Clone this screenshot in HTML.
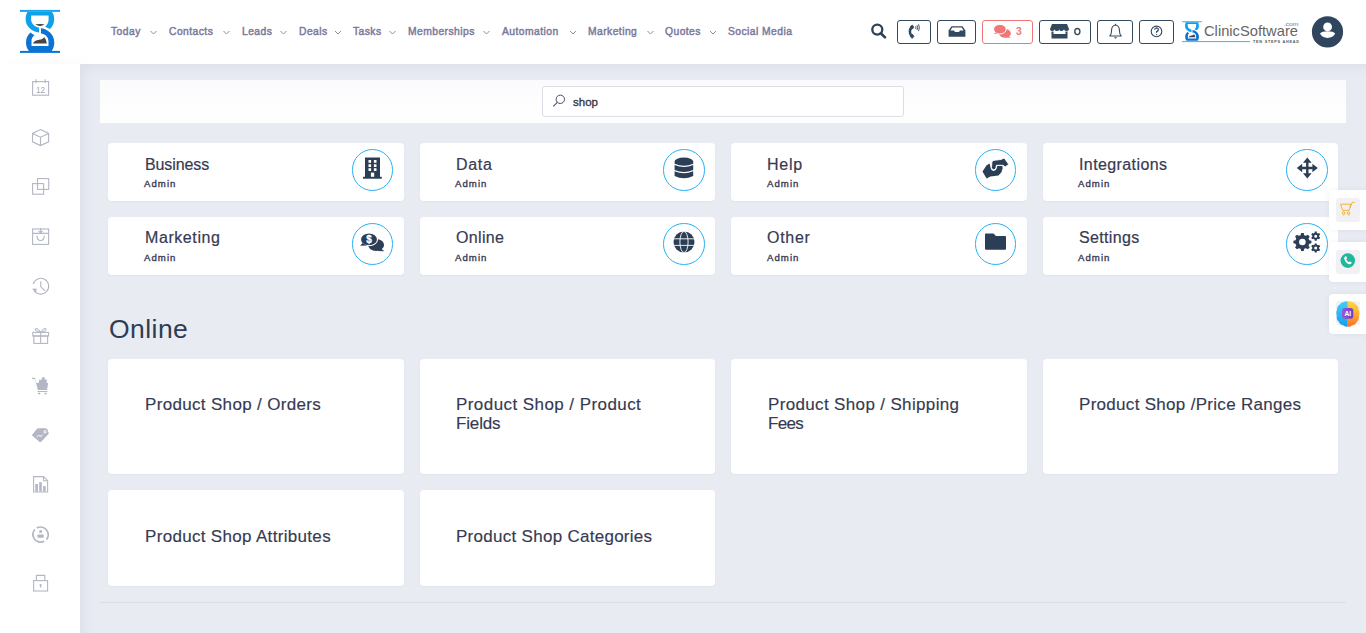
<!DOCTYPE html>
<html><head><meta charset="utf-8">
<style>
*{box-sizing:border-box;margin:0;padding:0}
html,body{width:1366px;height:633px;overflow:hidden;background:#e8ebf2;font-family:"Liberation Sans",sans-serif;position:relative}
.abs{position:absolute}
#header{position:absolute;left:0;top:0;width:1366px;height:64px;background:#fff}
#side{position:absolute;left:0;top:64px;width:80px;height:569px;background:#fff}
#main{position:absolute;left:80px;top:64px;width:1286px;height:569px;background:#e8ebf2;box-shadow:inset 10px 10px 14px -8px rgba(40,50,90,0.07)}
.nav{position:absolute;top:24.6px;font-size:10.3px;color:#7b7a9b;-webkit-text-stroke:0.45px #7b7a9b;letter-spacing:0.45px;white-space:nowrap;line-height:14px}
.chev{position:absolute;top:31px;width:8px;height:5px}
.btn{position:absolute;top:20px;height:24px;border:1.3px solid #34495e;border-radius:3px}
.card{position:absolute;background:#fff;border-radius:4px;box-shadow:0 1px 2px rgba(40,50,90,0.04)}
.ct{position:absolute;left:37px;top:11.6px;-webkit-text-stroke:0.2px #363a52;font-size:16px;color:#363a52;white-space:nowrap;line-height:20px}
.ca{position:absolute;left:36px;top:33.9px;font-size:9.6px;letter-spacing:1.05px;color:#3a3a55;-webkit-text-stroke:0.35px #3a3a55;line-height:13px}
.circ{position:absolute;width:41.5px;height:41.5px;border:1.4px solid #27b0f4;border-radius:50%;top:6px;left:243.4px}
.c1 .circ,.c3 .circ{left:243.9px}
.c2 .ct,.c3 .ct,.c4 .ct{left:36px}
.c2 .bt,.c4 .bt{left:36px}
.c2 .ca,.c4 .ca{left:35px}
.r2 .ct{top:10.6px}
.rb .bt{top:36.5px}
.bt{position:absolute;left:37px;top:35.8px;-webkit-text-stroke:0.15px #363a52;font-size:17px;letter-spacing:0.33px;color:#363a52;line-height:19px}
.wid{position:absolute;left:1329px;width:40px;background:#fff;border-radius:4px;box-shadow:0 0 5px rgba(40,50,90,0.07)}
.wq{position:absolute;left:7px;width:24px;height:24px;background:#f0f0f5;border-radius:3px}
.sic{position:absolute;left:31px}
</style></head><body>
<div id="main"></div>
<div id="side"></div>
<div id="header"></div>
<div class="abs" style="left:0;top:48px;width:100px;height:16px;background:radial-gradient(ellipse 50px 12px at 50% 100%,rgba(0,0,0,0.018),rgba(0,0,0,0))"></div>

<!-- logo -->
<svg class="abs" style="left:0;top:0" width="80" height="64" viewBox="0 0 80 64">
 <path d="M27.4 11.9 L52.1 11.9 C53.8 14 54.2 16.5 54.2 19.1 C54.2 23.5 52.5 26.8 50 29 L45.1 26.7 C47.3 25 48.6 22.5 48.6 19.5 L48.6 15.4 L31.1 15.4 L31.1 19.5 C31.1 23.5 34.5 26.5 39 27.7 L39 32.6 C31.5 31.5 25.6 26.5 25.6 19.1 C25.6 16.3 26.3 13.8 27.4 11.9Z" fill="#0ea0e8"/>
 <path d="M41 28.3 C46 28.8 54.3 33 54.3 42.5 C54.3 46 53.3 49 51.6 51.1 L29 51.1 C27 49 26 46 26 42.5 C26 38 27.8 34.8 30.4 32.5 L34.4 35.2 C32.5 36.8 31.5 38.5 31.5 41 L31.5 46 L48.5 46 L48.5 41.6 C48.5 37 45 33.8 41 33.6Z" fill="#0a74d6"/>
 <rect x="20" y="9.9" width="40" height="2" fill="#19a6ec"/>
 <rect x="20" y="50.9" width="40" height="2" fill="#0a74d6"/>
 <path d="M35.3 24.2 Q40 23.6 44.7 24.2 Q42 26.2 40 26 Q37.5 26 35.3 24.2Z" fill="#474747"/>
 <path d="M33 43.6 C33.5 41.5 36 40.3 39.2 39.8 C41.5 39.4 43 39 44.1 37.2 C45.2 38 46.5 40.5 46.8 43.6Z" fill="#474747"/>
</svg>

<!-- nav -->
<div class="nav" style="left:111px">Today</div>
<div class="nav" style="left:169px">Contacts</div>
<div class="nav" style="left:242px">Leads</div>
<div class="nav" style="left:299px">Deals</div>
<div class="nav" style="left:353px">Tasks</div>
<div class="nav" style="left:408px">Memberships</div>
<div class="nav" style="left:502px">Automation</div>
<div class="nav" style="left:588px">Marketing</div>
<div class="nav" style="left:665px">Quotes</div>
<div class="nav" style="left:728px">Social Media</div>
<svg class="abs" style="left:0;top:0" width="800" height="64">
 <g fill="none" stroke="#8d8caa" stroke-width="1">
  <path d="M150.5 31 L153.5 34 L156.5 31"/>
  <path d="M223.5 31 L226.5 34 L229.5 31"/>
  <path d="M280.5 31 L283.5 34 L286.5 31"/>
  <path d="M335.0 31 L338.0 34 L341.0 31"/>
  <path d="M389.5 31 L392.5 34 L395.5 31"/>
  <path d="M483.5 31 L486.5 34 L489.5 31"/>
  <path d="M570.0 31 L573.0 34 L576.0 31"/>
  <path d="M647.5 31 L650.5 34 L653.5 31"/>
  <path d="M710.0 31 L713.0 34 L716.0 31"/>
 </g>
</svg>

<!-- header right -->
<svg class="abs" style="left:868px;top:21px" width="22" height="22" viewBox="0 0 22 22">
 <circle cx="9.3" cy="8.6" r="5" fill="none" stroke="#2e4259" stroke-width="2.3"/>
 <path d="M12.8 12.2 L17 16.4" stroke="#2e4259" stroke-width="2.7" stroke-linecap="round"/>
</svg>
<div class="btn" style="left:897px;width:34px"></div>
<div class="btn" style="left:937px;width:39px"></div>
<div class="btn" style="left:982px;width:51px;border-color:#f07777"></div>
<div class="btn" style="left:1039px;width:52px"></div>
<div class="btn" style="left:1097px;width:36px"></div>
<div class="btn" style="left:1139px;width:35px"></div>

<svg class="abs" style="left:0;top:0" width="1366" height="64">
 <!-- phone -->
 <path d="M911.3 27.6 Q908.4 31.5 911.3 35.6" fill="none" stroke="#34495e" stroke-width="2.6" stroke-linecap="round"/>
 <path d="M910.3 26.6 L912.4 25 L913.9 27.6 L911.7 29.2Z" fill="#34495e" stroke="#34495e" stroke-width="0.8" stroke-linejoin="round"/>
 <path d="M910.3 36.4 L912.2 34.1 L914 36.3 L912.2 38.4Z" fill="#34495e" stroke="#34495e" stroke-width="0.8" stroke-linejoin="round"/>
 <g fill="none" stroke="#34495e" stroke-width="0.95">
  <path d="M915.6 26.4 Q916.4 27.6 915.6 28.9"/>
  <path d="M917 25.3 Q918.3 27.6 917 29.9"/>
  <path d="M918.5 24.3 Q920.3 27.6 918.5 30.9"/>
 </g>
 <!-- inbox -->
 <path d="M951.5 26.2 L962.5 26.2 L965.4 30.6 L965.4 36.8 L948.6 36.8 L948.6 30.6Z" fill="#34495e"/>
 <path d="M952.3 27.6 L961.7 27.6 L963.6 30.4 L960 30.4 L959 32 L955 32 L954 30.4 L950.4 30.4Z" fill="#fff"/>
 <!-- comments -->
 <g fill="#f07777">
  <ellipse cx="1005" cy="33.4" rx="5.9" ry="4.4"/>
  <path d="M1008.5 36 L1010.9 37.8 L1006 37.5Z"/>
  <ellipse cx="999.9" cy="29.2" rx="6.3" ry="4.8" stroke="#fff" stroke-width="1"/>
  <path d="M995.5 32.5 L993.8 33.9 L998 33.6Z"/>
 </g>
 <text x="1015.9" y="35" font-family="Liberation Sans" font-weight="bold" font-size="10.2" fill="#f07777" textLength="5.8" lengthAdjust="spacingAndGlyphs">3</text>
 <!-- store -->
 <path d="M1052 24 L1067 24 L1069 29 Q1069 31 1067 31 Q1064.5 31 1064 29.5 Q1063 31 1061 31 Q1059.5 31 1059.5 29.5 Q1058.5 31 1057 31 Q1055 31 1054.5 29.5 Q1054 31 1052 31 Q1050 31 1050 29Z" fill="#34495e"/>
 <path d="M1051.5 31.5 L1053.5 31.5 L1053.5 34 L1065.5 34 L1065.5 31.5 L1067.5 31.5 L1067.5 38.5 L1051.5 38.5Z" fill="#34495e"/>
 <ellipse cx="1077.35" cy="31.5" rx="2.55" ry="3.05" fill="none" stroke="#34495e" stroke-width="1.35"/>
 <!-- bell -->
 <path d="M1115.5 25 C1112 25.5 1111.5 28 1111.5 31 C1111.5 34 1110.8 35 1109.8 36 L1121.2 36 C1120.2 35 1119.5 34 1119.5 31 C1119.5 28 1119 25.5 1115.5 25Z" fill="none" stroke="#34495e" stroke-width="1.1" stroke-linejoin="round"/>
 <path d="M1115.5 23.8 L1115.5 25" stroke="#34495e" stroke-width="1.2"/>
 <path d="M1113.8 37.3 L1117.2 37.3 L1115.5 38.8Z" fill="#34495e"/>
 <!-- help -->
 <circle cx="1156.5" cy="31.4" r="5.3" fill="none" stroke="#34495e" stroke-width="1.1"/>
 <path d="M1154.6 29.8 Q1154.8 27.8 1156.6 27.8 Q1158.4 27.9 1158.4 29.6 Q1158.3 30.8 1156.6 31.6 L1156.6 32.8" fill="none" stroke="#34495e" stroke-width="1.2"/>
 <circle cx="1156.6" cy="34.6" r="0.7" fill="#34495e"/>
</svg>

<!-- clinic software logo -->
<svg class="abs" style="left:1180px;top:15px" width="125" height="32" viewBox="0 0 125 32">
 <g transform="translate(2.3 6.3) scale(0.485 0.475) translate(-20 -9.9)">
 <path d="M27.4 11.9 L52.1 11.9 C53.8 14 54.2 16.5 54.2 19.1 C54.2 23.5 52.5 26.8 50 29 L45.1 26.7 C47.3 25 48.6 22.5 48.6 19.5 L48.6 15.4 L31.1 15.4 L31.1 19.5 C31.1 23.5 34.5 26.5 39 27.7 L39 32.6 C31.5 31.5 25.6 26.5 25.6 19.1 C25.6 16.3 26.3 13.8 27.4 11.9Z" fill="#0ea0e8"/>
 <path d="M41 28.3 C46 28.8 54.3 33 54.3 42.5 C54.3 46 53.3 49 51.6 51.1 L29 51.1 C27 49 26 46 26 42.5 C26 38 27.8 34.8 30.4 32.5 L34.4 35.2 C32.5 36.8 31.5 38.5 31.5 41 L31.5 46 L48.5 46 L48.5 41.6 C48.5 37 45 33.8 41 33.6Z" fill="#0a74d6"/>
 <rect x="20" y="9.9" width="40" height="2" fill="#19a6ec"/>
 <path d="M33 43.6 C33.5 41.5 36 40.3 39.2 39.8 C41.5 39.4 43 39 44.1 37.2 C45.2 38 46.5 40.5 46.8 43.6Z" fill="#474747"/>
 </g>
 <rect x="2" y="26.2" width="68" height="0.9" fill="#3da0e8"/>
 <text x="24" y="20.9" font-family="Liberation Sans" font-size="14.6" fill="#666" textLength="94" lengthAdjust="spacingAndGlyphs">ClinicSoftware</text>
 <text x="103.5" y="11" font-family="Liberation Sans" font-size="6" fill="#777" textLength="15" lengthAdjust="spacingAndGlyphs">.com</text>
 <text x="73" y="28.4" font-family="Liberation Sans" font-weight="bold" font-size="3.8" fill="#555" textLength="46" lengthAdjust="spacing">TEN STEPS AHEAD</text>
</svg>
<!-- avatar -->
<svg class="abs" style="left:1311px;top:15px" width="34" height="34" viewBox="0 0 34 34">
 <circle cx="16.5" cy="16.9" r="15.6" fill="#30465e"/>
 <circle cx="16.6" cy="11.9" r="4.4" fill="#fff"/>
 <path d="M9 18.6 Q11 16.2 16.6 16.2 Q22.2 16.2 24.2 18.6 Q22 22.9 16.6 22.9 Q11.2 22.9 9 18.6Z" fill="#fff"/>
</svg>



<!-- sidebar icons -->
<svg class="abs" style="left:0;top:64px" width="80" height="569" viewBox="0 64 80 569">
 <g fill="none" stroke="#b3b6c4" stroke-width="1.1">
  <!-- calendar -->
  <rect x="32.6" y="81.6" width="16" height="13.6"/>
  <path d="M36 79.2 V83 M45.2 79.2 V83"/>
  <text x="40.6" y="93.3" font-family="Liberation Sans" font-size="8.2" fill="#a4a7b6" stroke="none" text-anchor="middle">12</text>
  <!-- cube -->
  <path d="M40.5 129.6 L48.6 133.4 L48.6 141.8 L40.5 145.6 L32.5 141.8 L32.5 133.4Z M32.5 133.4 L40.5 137.2 L48.6 133.4 M40.5 137.2 V145.6"/>
  <!-- copy -->
  <rect x="37.5" y="178.6" width="11.2" height="10.8"/>
  <rect x="32.6" y="183.6" width="11" height="10.6"/>
  <!-- box -->
  <rect x="32.6" y="229" width="16" height="15.4"/>
  <path d="M32.6 233.4 H48.6 M40.6 228 V232.5 M38.6 230.8 L40.6 232.8 L42.6 230.8 M37 235.5 Q37 240.5 40.6 240.5 Q44.2 240.5 44.2 235.5"/>
  <!-- history -->
  <path d="M34.5 291 A7.9 7.9 0 1 0 33.2 284"/>
  <path d="M40.8 281.2 V286.8 L45 290.6"/>
  <!-- gift -->
  <rect x="32.8" y="332.4" width="15.8" height="3.6"/>
  <rect x="33.8" y="336" width="13.8" height="7.4"/>
  <path d="M40.7 332.4 V343.4 M40.7 332.4 Q37 327 35.5 329 Q34.5 331 40.7 332.4 M40.7 332.4 Q44.4 327 45.9 329 Q46.9 331 40.7 332.4"/>
  <!-- report -->
  <path d="M33.6 476.6 H43.5 L47.6 480.7 V492 H33.6Z M43.5 476.6 V480.7 H47.6"/>
  <!-- user circle -->
  <circle cx="40.6" cy="534.6" r="7.6" stroke-width="1.7" stroke-dasharray="21 3 21 3" transform="rotate(-120 40.6 534.6)"/>
  <!-- lock -->
  <rect x="33.6" y="580.6" width="14" height="10.4"/>
  <path d="M36.4 580.6 V575.4 H44.8 V580.6"/>
 </g>
 <g fill="#b3b6c4">
  <path d="M32.3 288.5 L35.2 293 L37 288.8Z"/>
  <!-- cart -->
  <path d="M32.4 377.6 L35 378 L36.5 383 L48.2 383 L47 390 L37.8 390 L35.2 379.2 L32.2 379Z"/>
  <path d="M37.5 391 H47.3 V392 H37.5Z"/>
  <rect x="38" y="392.8" width="2.2" height="1.5"/><rect x="44.5" y="392.8" width="2.2" height="1.5"/>
  <path d="M38.5 383 L39.5 379.5 L41.5 380 L42 377.5 L44.2 377 L45 379.5 L47 379.8 L46.5 383Z"/>
  <!-- tag -->
  <path d="M31.8 435.2 L36.8 429 Q37.5 428.2 38.5 428.2 L45.5 428.2 Q46.5 428.2 47.2 429 L48.9 433.6 L41.2 441.8 Q40.3 442.4 39.4 441.8Z"/>
  <!-- report bars -->
  <rect x="35.3" y="484" width="2.6" height="7.5"/><rect x="39.2" y="482.2" width="2.6" height="9.3"/><rect x="43.1" y="486.1" width="2.6" height="5.4"/>
  <!-- user -->
  <circle cx="40.6" cy="531.6" r="1.5"/>
  <rect x="37.4" y="534.6" width="6.4" height="3.2" rx="1"/>
  <!-- lock keyhole -->
  <circle cx="40.6" cy="585.2" r="1.1"/><rect x="40.1" y="585.5" width="1" height="2.2"/>
 </g>
 <g fill="none" stroke="#fff" stroke-width="1">
  <path d="M36.8 437 Q38.4 434.2 39.8 436 Q41.2 437.6 42.6 434.6"/><circle cx="45" cy="431.8" r="1.2"/>
 </g>
</svg>

<!-- search panel -->
<div class="abs" style="left:100px;top:80px;width:1246px;height:43px;background:linear-gradient(#fbfbfd,#fff)"></div>
<div class="abs" style="left:542px;top:86px;width:362px;height:31px;border:1px solid #dcdde6;border-radius:3px;background:#fff"></div>
<svg class="abs" style="left:552px;top:94px" width="14" height="14" viewBox="0 0 14 14">
 <circle cx="8.3" cy="5.3" r="4.2" fill="none" stroke="#4a4a66" stroke-width="1"/>
 <path d="M5.3 8.3 L1.3 12.3" stroke="#4a4a66" stroke-width="1.1"/>
</svg>
<div class="abs" style="left:573px;top:95px;font-size:11.5px;color:#383848;line-height:14px;-webkit-text-stroke:0.35px #383848">shop</div>

<!-- admin cards -->
<div class="card c1" style="left:108px;top:143px;width:296px;height:58px"><div class="ct" style="letter-spacing:-0.1px">Business</div><div class="ca">Admin</div><div class="circ"></div></div>
<div class="card c2" style="left:420px;top:143px;width:295px;height:58px"><div class="ct" style="letter-spacing:0.7px">Data</div><div class="ca">Admin</div><div class="circ"></div></div>
<div class="card c3" style="left:731px;top:143px;width:296px;height:58px"><div class="ct" style="letter-spacing:0.75px">Help</div><div class="ca">Admin</div><div class="circ"></div></div>
<div class="card c4" style="left:1043px;top:143px;width:295px;height:58px"><div class="ct" style="letter-spacing:0.4px">Integrations</div><div class="ca">Admin</div><div class="circ"></div></div>
<div class="card c1 r2" style="left:108px;top:217px;width:296px;height:58px"><div class="ct" style="letter-spacing:0.58px">Marketing</div><div class="ca">Admin</div><div class="circ"></div></div>
<div class="card c2 r2" style="left:420px;top:217px;width:295px;height:58px"><div class="ct" style="letter-spacing:0.33px">Online</div><div class="ca">Admin</div><div class="circ"></div></div>
<div class="card c3 r2" style="left:731px;top:217px;width:296px;height:58px"><div class="ct" style="letter-spacing:0.72px">Other</div><div class="ca">Admin</div><div class="circ"></div></div>
<div class="card c4 r2" style="left:1043px;top:217px;width:295px;height:58px"><div class="ct" style="letter-spacing:0.34px">Settings</div><div class="ca">Admin</div><div class="circ"></div></div>

<!-- heading -->
<div class="abs" style="left:109px;top:314px;font-size:26.5px;letter-spacing:0.45px;color:#2e3d52;line-height:30px">Online</div>

<!-- big cards -->
<div class="card" style="left:108px;top:359px;width:296px;height:115px"><div class="bt">Product Shop / Orders</div></div>
<div class="card c2" style="left:420px;top:359px;width:295px;height:115px"><div class="bt" style="letter-spacing:0.43px">Product Shop / Product<br><span style="letter-spacing:-0.15px">Fields</span></div></div>
<div class="card" style="left:731px;top:359px;width:296px;height:115px"><div class="bt" style="letter-spacing:0.35px">Product Shop / Shipping<br><span style="letter-spacing:-0.7px">Fees</span></div></div>
<div class="card c4" style="left:1043px;top:359px;width:295px;height:115px"><div class="bt" style="letter-spacing:0.3px">Product Shop /Price Ranges</div></div>
<div class="card rb" style="left:108px;top:490px;width:296px;height:96px"><div class="bt" style="letter-spacing:0.32px">Product Shop Attributes</div></div>
<div class="card c2 rb" style="left:420px;top:490px;width:295px;height:96px"><div class="bt" style="letter-spacing:0.28px">Product Shop Categories</div></div>

<div class="abs" style="left:100px;top:602px;width:1246px;height:1px;background:#dcdee5"></div>


<!-- card icons -->
<svg class="abs" style="left:0;top:0;pointer-events:none" width="1366" height="300">
 <g fill="#2c3e55">
  <!-- building -->
  <rect x="365" y="157.5" width="15" height="20"/>
  <rect x="363" y="176.8" width="18.8" height="1.9"/>
  <g fill="#fff">
   <rect x="368.5" y="160" width="2.6" height="2.8"/><rect x="373.9" y="160" width="2.6" height="2.8"/>
   <rect x="368.5" y="164.2" width="2.6" height="2.8"/><rect x="373.9" y="164.2" width="2.6" height="2.8"/>
   <rect x="368.5" y="168.2" width="2.6" height="2.8"/><rect x="373.9" y="168.2" width="2.6" height="2.8"/>
   <rect x="370.9" y="172.6" width="3.3" height="4.2"/>
  </g>
  <!-- database -->
  <path d="M674.6 161.4 A9.3 3.8 0 0 1 693.2 161.4 L693.2 163.8 Q683.9 167.8 674.6 163.8Z"/>
  <path d="M674.6 165 Q683.9 169 693.2 165 L693.2 170 Q683.9 174 674.6 170Z"/>
  <path d="M674.6 171.2 Q683.9 175.2 693.2 171.2 L693.2 176 Q683.9 180.4 674.6 176Z"/>
  <!-- handshake -->
  <path d="M982.5 171.4 L986.6 165.3 L989.6 163.6 L990.3 166.5 Q990.8 170.5 993.6 171 Q996.5 171 997.3 166.1 L1002.4 166.1 L1002.6 168.6 L1001.4 172.3 L998.5 175.5 L990.3 176.4 L986.6 178.6Z"/>
  <path d="M1004.2 157.9 L1008.8 164.4 L1005.1 166.9 L1003 165.3 L996.4 165.3 L996 167.8 Q995 170 993.6 169.8 Q991.5 169.5 991.5 167.5 L991.9 162 Q992.5 160.5 994 160.3 L1001 159.5Z" stroke="#fff" stroke-width="0.9"/>
  <!-- arrows -->
  <path d="M1307.3 157.6 L1311.6 162.8 L1308.5 162.8 L1308.5 166.8 L1312.4 166.8 L1312.4 163.7 L1317.8 168 L1312.4 172.3 L1312.4 169.2 L1308.5 169.2 L1308.5 173.3 L1311.6 173.3 L1307.3 178.6 L1303 173.3 L1306.1 173.3 L1306.1 169.2 L1302.2 169.2 L1302.2 172.3 L1296.8 168 L1302.2 163.7 L1302.2 166.8 L1306.1 166.8 L1306.1 162.8 L1303 162.8Z"/>
  <!-- comments dollar -->
  <ellipse cx="376.1" cy="245" rx="8" ry="6.1"/>
  <path d="M381 248.5 L384.3 251.2 L377.5 250.9Z"/>
  <ellipse cx="369" cy="239.4" rx="8.5" ry="6.4" stroke="#fff" stroke-width="1.1"/>
  <path d="M362.5 243 L360.2 245.7 L367 245.6Z"/>
  <!-- globe -->
  <circle cx="684" cy="242" r="10.5"/>
  <!-- folder -->
  <path d="M985.8 233.6 L993.5 233.6 L996 236 L1005 236 Q1006 236 1006 237 L1006 249 Q1006 249.8 1005 249.8 L986 249.8 Q985 249.8 985 249 L985 234.5 Q985 233.6 985.8 233.6Z"/>
  <!-- cogs -->
  <path fill-rule="evenodd" d="M1300.61 235.13 L1301.07 233.00 L1303.73 233.00 L1304.19 235.13 L1305.99 235.87 L1307.82 234.69 L1309.71 236.58 L1308.53 238.41 L1309.27 240.21 L1311.40 240.67 L1311.40 243.33 L1309.27 243.79 L1308.53 245.59 L1309.71 247.42 L1307.82 249.31 L1305.99 248.13 L1304.19 248.87 L1303.73 251.00 L1301.07 251.00 L1300.61 248.87 L1298.81 248.13 L1296.98 249.31 L1295.09 247.42 L1296.27 245.59 L1295.53 243.79 L1293.40 243.33 L1293.40 240.67 L1295.53 240.21 L1296.27 238.41 L1295.09 236.58 L1296.98 234.69 L1298.81 235.87Z M1305.70 242.00 A3.3 3.3 0 1 0 1299.10 242.00 A3.3 3.3 0 1 0 1305.70 242.00Z"/>
  <path fill-rule="evenodd" d="M1314.53 232.90 L1314.74 231.60 L1316.66 231.60 L1316.87 232.90 L1317.97 233.54 L1319.20 233.07 L1320.16 234.73 L1319.14 235.56 L1319.14 236.84 L1320.16 237.67 L1319.20 239.33 L1317.97 238.86 L1316.87 239.50 L1316.66 240.80 L1314.74 240.80 L1314.53 239.50 L1313.43 238.86 L1312.20 239.33 L1311.24 237.67 L1312.26 236.84 L1312.26 235.56 L1311.24 234.73 L1312.20 233.07 L1313.43 233.54Z M1317.20 236.20 A1.5 1.5 0 1 0 1314.20 236.20 A1.5 1.5 0 1 0 1317.20 236.20Z"/>
  <path fill-rule="evenodd" d="M1314.53 244.70 L1314.74 243.40 L1316.66 243.40 L1316.87 244.70 L1317.97 245.34 L1319.20 244.87 L1320.16 246.53 L1319.14 247.36 L1319.14 248.64 L1320.16 249.47 L1319.20 251.13 L1317.97 250.66 L1316.87 251.30 L1316.66 252.60 L1314.74 252.60 L1314.53 251.30 L1313.43 250.66 L1312.20 251.13 L1311.24 249.47 L1312.26 248.64 L1312.26 247.36 L1311.24 246.53 L1312.20 244.87 L1313.43 245.34Z M1317.20 248.00 A1.5 1.5 0 1 0 1314.20 248.00 A1.5 1.5 0 1 0 1317.20 248.00Z"/>
 </g>
 <!-- dollar sign -->
 <text x="369.1" y="243.2" font-family="Liberation Sans" font-weight="bold" font-size="10" fill="#fff" stroke="#fff" stroke-width="0.3" text-anchor="middle">$</text>
 <!-- globe lines -->
 <g fill="none" stroke="#fff" stroke-width="0.9">
  <path d="M673 238.8 L695 238.8 M673 245.4 L695 245.4"/>
  <ellipse cx="684" cy="242" rx="4.1" ry="10.6"/>
 </g>
 <!-- db separators -->
</svg>

<!-- widgets -->
<div class="wid" style="top:190px;height:40px"><div class="wq" style="top:8px"></div></div>
<div class="wid" style="top:242px;height:40px"><div class="wq" style="top:8px"></div></div>
<div class="wid" style="top:294px;height:40px"><div class="wq" style="top:7px"></div></div>


<svg class="abs" style="left:1329px;top:185px" width="37" height="150" viewBox="1329 185 37 150">
 <!-- cart -->
 <g fill="none" stroke="#f7b232" stroke-width="1" stroke-linejoin="round">
  <path d="M1340.6 204.2 L1350.8 204.2 L1349.2 210.3 L1342.6 210.3Z"/>
  <path d="M1350 208 L1352.2 202.3 L1354.8 202.3"/>
  <path d="M1342.3 213 A1.3 1.3 0 1 1 1344.9 213 L1343.6 215.2Z M1347.3 213 A1.3 1.3 0 1 1 1349.9 213 L1348.6 215.2Z"/>
 </g>
 <!-- phone -->
 <circle cx="1347.8" cy="260.6" r="7.3" fill="#20b79a"/>
 <path d="M1345 256.5 L1346.3 256.3 L1347 258.5 L1346.2 259.3 Q1347 261.5 1348.8 262.3 L1349.6 261.5 L1351.6 262.3 L1351.4 263.6 Q1350.5 264.6 1349 264.2 Q1345.5 263 1344.2 259 Q1344 257.5 1345 256.5Z" fill="#fff"/>
 <!-- AI -->
 <defs>
  <linearGradient id="aiL" x1="0" y1="0" x2="0" y2="1"><stop offset="0" stop-color="#45cdf6"/><stop offset="1" stop-color="#169ff0"/></linearGradient>
  <linearGradient id="aiR" x1="0" y1="0" x2="0" y2="1"><stop offset="0" stop-color="#fdd83a"/><stop offset="0.5" stop-color="#fcae32"/><stop offset="1" stop-color="#f8702c"/></linearGradient>
  <clipPath id="cL"><rect x="1330" y="295" width="17.8" height="40"/></clipPath>
  <clipPath id="cR"><rect x="1347.8" y="295" width="20" height="40"/></clipPath>
  <linearGradient id="aiP" x1="0" y1="0" x2="1" y2="0"><stop offset="0" stop-color="#9b58d8"/><stop offset="1" stop-color="#6a3fc8"/></linearGradient>
 </defs>
 <path d="M1347.8 301.5 Q1350 300.8 1351.5 302 Q1354.5 302 1356 304.5 Q1359 306.5 1358.5 309.5 Q1360 312.5 1358.8 315.5 Q1359.5 319.5 1357 321.5 Q1355.5 325 1352 325.5 Q1350 327.2 1347.8 326.5 Q1345.6 327.2 1343.6 325.5 Q1340 325 1338.6 321.5 Q1336 319.5 1336.8 315.5 Q1335.6 312.5 1337.1 309.5 Q1336.6 306.5 1339.6 304.5 Q1341 302 1344.1 302 Q1345.6 300.8 1347.8 301.5Z" fill="url(#aiL)" clip-path="url(#cL)"/>
 <path d="M1347.8 301.5 Q1350 300.8 1351.5 302 Q1354.5 302 1356 304.5 Q1359 306.5 1358.5 309.5 Q1360 312.5 1358.8 315.5 Q1359.5 319.5 1357 321.5 Q1355.5 325 1352 325.5 Q1350 327.2 1347.8 326.5 Q1345.6 327.2 1343.6 325.5 Q1340 325 1338.6 321.5 Q1336 319.5 1336.8 315.5 Q1335.6 312.5 1337.1 309.5 Q1336.6 306.5 1339.6 304.5 Q1341 302 1344.1 302 Q1345.6 300.8 1347.8 301.5Z" fill="url(#aiR)" clip-path="url(#cR)"/>
 <rect x="1342" y="308.1" width="11.3" height="10.6" rx="2.8" fill="url(#aiP)"/>
 <text x="1347.7" y="316.2" font-family="Liberation Sans" font-weight="bold" font-size="6.6" fill="#fff" text-anchor="middle">AI</text>
</svg>

</body></html>
